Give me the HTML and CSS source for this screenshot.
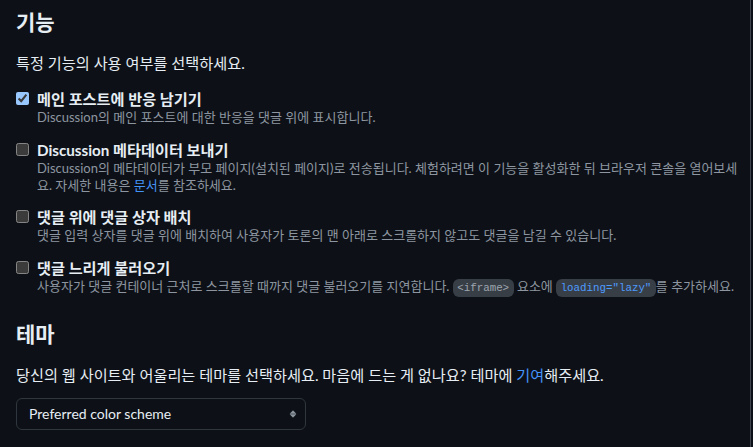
FILE: index.html
```html
<!DOCTYPE html>
<html lang="ko">
<head>
<meta charset="utf-8">
<title>설정</title>
<link rel="stylesheet" href="styles.css">
</head>
<body>
<div class="page">
  <h2 class="title">기능</h2>
  <p class="lead">특정 기능의 사용 여부를 선택하세요.</p>
  <div class="options">
    <label class="option">
      <input type="checkbox" class="check" checked>
      <span class="option-body">
        <span class="option-label">메인 포스트에 반응 남기기</span>
        <span class="option-desc">Discussion의 메인 포스트에 대한 반응을 댓글 위에 표시합니다.</span>
      </span>
    </label>
    <label class="option">
      <input type="checkbox" class="check">
      <span class="option-body">
        <span class="option-label">Discussion 메타데이터 보내기</span>
        <span class="option-desc">Discussion의 메타데이터가 부모 페이지(설치된 페이지)로 전송됩니다. 체험하려면 이 기능을 활성화한 뒤 브라우저 콘솔을 열어보세요. 자세한 내용은 <a class="link" href="#">문서</a>를 참조하세요.</span>
      </span>
    </label>
    <label class="option">
      <input type="checkbox" class="check">
      <span class="option-body">
        <span class="option-label">댓글 위에 댓글 상자 배치</span>
        <span class="option-desc">댓글 입력 상자를 댓글 위에 배치하여 사용자가 토론의 맨 아래로 스크롤하지 않고도 댓글을 남길 수 있습니다.</span>
      </span>
    </label>
    <label class="option">
      <input type="checkbox" class="check">
      <span class="option-body">
        <span class="option-label">댓글 느리게 불러오기</span>
        <span class="option-desc">사용자가 댓글 컨테이너 근처로 스크롤할 때까지 댓글 불러오기를 지연합니다. <code class="code">&lt;iframe&gt;</code> 요소에 <code class="code code-link">loading="lazy"</code>를 추가하세요.</span>
      </span>
    </label>
  </div>

  <h2 class="title title-theme">테마</h2>
  <p class="lead">당신의 웹 사이트와 어울리는 테마를 선택하세요. 마음에 드는 게 없나요? 테마에 <a class="link" href="#">기여</a>해주세요.</p>
  <div class="select-wrap">
    <select class="select">
      <option>Preferred color scheme</option>
    </select>
    <svg class="select-icon" width="14" height="14" viewBox="0 0 16 16" aria-hidden="true"><path d="M4.427 7.427l3.396-3.396a.25.25 0 01.354 0l3.396 3.396A.25.25 0 0111.396 7.854H4.604a.25.25 0 01-.177-.427zM4.427 8.573l3.396 3.396a.25.25 0 00.354 0l3.396-3.396A.25.25 0 0011.396 8.146H4.604a.25.25 0 00-.177.427z" fill="#8d96a0"/></svg>
  </div>
</div>
</body>
</html>
```
FILE: styles.css
```css
html, body {
  margin: 0;
  padding: 0;
  background: #0d1117;
  color-scheme: dark;
}
body {
  font-family: Lato, "Noto Sans CJK KR", sans-serif;
  color: #e6edf3;
  font-size: 15px;
}
.page {
  width: 751px;
  min-height: 447px;
  box-sizing: border-box;
  padding: 7px 7px 0 16px;
  border-right: 1px solid #3d444d;
}
.title {
  margin: 0;
  font-size: 21px;
  line-height: 30px;
  font-weight: 700;
}
.title-theme {
  margin-top: 22px;
}
.lead {
  margin: 16px 0 0 0;
  font-size: 15.2px;
  line-height: 20px;
}
.options {
  display: flex;
  flex-direction: column;
  gap: 13.5px;
  margin-top: 16px;
}
.option {
  display: flex;
  align-items: flex-start;
  gap: 8px;
}
.check {
  margin: 3px 0 0 0;
  width: 13px;
  height: 13px;
  flex: none;
}
.option-body {
  display: flex;
  flex-direction: column;
}
.option-label {
  font-weight: 700;
  font-size: 15.2px;
  line-height: 20px;
}
.option-desc {
  font-size: 13px;
  line-height: 17px;
  color: #8d96a0;
}
.link {
  color: #4493f8;
  text-decoration: none;
}
.code {
  font-family: "Liberation Mono", monospace;
  font-size: 10.8px;
  padding: 3px 4.5px;
  border-radius: 6px;
  background: #383e46;
  color: #9ea6af;
}
.code-link {
  color: #4d9bff;
}
.select-wrap {
  position: relative;
  width: 290px;
  margin-top: 13px;
}
.select {
  appearance: none;
  -webkit-appearance: none;
  display: block;
  width: 100%;
  height: 32px;
  box-sizing: border-box;
  padding: 0 28px 0 12px;
  font-family: Lato, "Noto Sans CJK KR", sans-serif;
  font-size: 14px;
  color: #e6edf3;
  background: #0d1117;
  border: 1px solid #30363d;
  border-radius: 6px;
}
.select-icon {
  position: absolute;
  right: 6px;
  top: 9px;
  pointer-events: none;
}
```
